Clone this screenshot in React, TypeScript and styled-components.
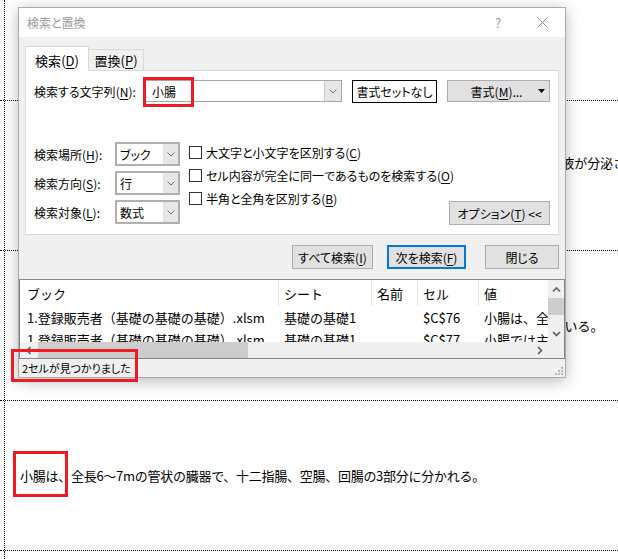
import React from "react";
import styled, { createGlobalStyle } from "styled-components";

const JP = `"Noto Sans CJK JP", "Noto Sans", sans-serif`;

const GlobalStyle = createGlobalStyle`
  html, body { margin: 0; padding: 0; background: #fff; }
  body {
    width: 618px; height: 559px; overflow: hidden; position: relative;
    font-family: ${JP}; color: #000;
  }
  * { box-sizing: border-box; }
`;

/* ---------- background sheet ---------- */
const Sheet = styled.div`
  width: 618px;
  height: 559px;
  display: flex;
  flex-direction: column;
`;

const SheetRow = styled.div<{ $h?: number; $last?: boolean }>`
  flex: ${(p) => (p.$last ? "1" : "none")};
  height: ${(p) => (p.$h ? `${p.$h}px` : "auto")};
  border-bottom: ${(p) => (p.$last ? "none" : "1px dotted #000")};
  display: flex;
`;

const SheetCell = styled.div`
  flex: 1;
  margin-left: 4px;
  border-left: 1px dotted #000;
  display: flex;
  align-items: center;
  padding-left: 15px;
  font-size: 13px;
  line-height: 26px;
  white-space: nowrap;
  overflow: hidden;
`;

const Para = styled.div<{ $spacing?: number }>`
  white-space: nowrap;
  letter-spacing: ${(p) => (p.$spacing ? `${p.$spacing}px` : "normal")};
`;

/* ---------- annotation boxes ---------- */
const Highlight = styled.div<{ $x: number; $y: number; $w: number; $h: number }>`
  position: absolute;
  left: ${(p) => p.$x}px;
  top: ${(p) => p.$y}px;
  width: ${(p) => p.$w}px;
  height: ${(p) => p.$h}px;
  border: 3px solid #ed1c24;
  z-index: 10;
  pointer-events: none;
`;

/* ---------- dialog ---------- */
const Dialog = styled.div`
  position: absolute;
  left: 18px;
  top: 7px;
  width: 548px;
  height: 371px;
  border: 1px solid #aaaaaa;
  background: #f0f0f0;
  box-shadow: 0 3px 14px rgba(0, 0, 0, 0.28);
  display: flex;
  flex-direction: column;
  font-family: ${JP};
  font-size: 12px;
  font-feature-settings: "palt";
  z-index: 5;
`;

const TitleBar = styled.div`
  height: 29px;
  flex: none;
  background: #fff;
  display: flex;
  align-items: center;
  padding-left: 8px;
`;

const Title = styled.div`
  color: #9a9a9a;
  font-size: 12px;
  flex: 1;
`;

const CaptionButton = styled.div<{ $w: number }>`
  width: ${(p) => p.$w}px;
  height: 29px;
  display: flex;
  align-items: center;
  justify-content: center;
  color: #999;
  font-size: 13px;
`;

const Body = styled.div`
  flex: none;
  display: flex;
  flex-direction: column;
  padding: 9px 6px 0 6px;
`;

const Tabs = styled.div`
  height: 24px;
  display: flex;
  align-items: flex-end;
`;

const Tab = styled.div<{ $active?: boolean; $w: number }>`
  position: relative;
  width: ${(p) => p.$w}px;
  height: ${(p) => (p.$active ? 25 : 21)}px;
  margin-bottom: ${(p) => (p.$active ? -1 : 0)}px;
  margin-left: ${(p) => (p.$active ? 0 : -1)}px;
  z-index: ${(p) => (p.$active ? 2 : 1)};
  background: ${(p) => (p.$active ? "#fff" : "#f0f0f0")};
  border: 1px solid #d9d9d9;
  border-bottom: none;
  display: flex;
  align-items: center;
  justify-content: center;
  padding-top: ${(p) => (p.$active ? 2 : 0)}px;
  font-size: 13px;
`;

const Panel = styled.div`
  height: 165px;
  background: #fff;
  border: 1px solid #d9d9d9;
  padding: 9px 7px 9px 8px;
  display: flex;
  flex-direction: column;
`;

const SearchRow = styled.div`
  height: 22px;
  display: flex;
  align-items: center;
`;

const FieldLabel = styled.div<{ $w: number }>`
  width: ${(p) => p.$w}px;
  flex: none;
  white-space: nowrap;
`;

const Combo = styled.div`
  width: 197px;
  height: 22px;
  border: 1px solid #a5a5a5;
  background: #fff;
  display: flex;
  align-items: stretch;
`;

const ComboText = styled.div`
  flex: 1;
  display: flex;
  align-items: center;
  padding-left: 6px;
  font-size: 12px;
`;

const DropPart = styled.div<{ $w: number }>`
  width: ${(p) => p.$w}px;
  flex: none;
  background: #e6e6e6;
  border-left: 1px solid #c9c9c9;
  display: flex;
  align-items: center;
  justify-content: center;
`;

const PreviewBox = styled.div`
  margin-left: 10px;
  width: 85px;
  height: 23px;
  border: 1px solid #000;
  background: #fff;
  display: flex;
  align-items: center;
  justify-content: center;
  margin-top: 1px;
`;

const Button = styled.div<{ $w: number; $h?: number; $default?: boolean }>`
  width: ${(p) => p.$w}px;
  height: ${(p) => p.$h ?? 24}px;
  flex: none;
  background: #e1e1e1;
  border: ${(p) => (p.$default ? "2px solid #0078d7" : "1px solid #adadad")};
  display: flex;
  align-items: center;
  justify-content: center;
  font-size: 12px;
  white-space: nowrap;
`;

const FormatButton = styled.div`
  margin-left: 10px;
  width: 103px;
  height: 22px;
  background: #e1e1e1;
  border: 1px solid #adadad;
  display: grid;
  grid-template-columns: 1fr auto 1fr;
  align-items: center;
  padding-right: 4px;
`;

const FormatText = styled.div`
  grid-column: 2;
  white-space: nowrap;
`;

const FormatArrow = styled.div`
  grid-column: 3;
  justify-self: end;
  display: flex;
`;

const OptionsArea = styled.div`
  margin-top: 40px;
  display: flex;
  flex: 1;
`;

const OptionsGrid = styled.div`
  display: grid;
  grid-template-columns: 81px 65px;
  grid-auto-rows: 24px;
  row-gap: 5px;
  align-items: center;
  flex: none;
`;

const Select = styled.div`
  height: 24px;
  border: 2px solid #b0b0b0;
  background: #fff;
  display: flex;
  align-items: stretch;
`;

const SelectText = styled.div`
  flex: 1;
  display: flex;
  align-items: center;
  padding-left: 3px;
`;

const SelectDrop = styled.div`
  width: 15px;
  background: #e6e6e6;
  display: flex;
  align-items: center;
  justify-content: center;
`;

const CheckList = styled.div`
  flex: 1;
  min-width: 0;
  margin-left: 9px;
  margin-top: -1px;
  display: flex;
  flex-direction: column;
  gap: 1px;
`;

const CheckRow = styled.div`
  height: 22px;
  display: flex;
  align-items: center;
  white-space: nowrap;
`;

const CheckBox = styled.div`
  width: 13px;
  height: 13px;
  border: 1px solid #333;
  background: #fff;
  margin-right: 4px;
  flex: none;
`;

const OptionsButtonWrap = styled.div`
  flex: none;
  margin-right: 1px;
  align-self: flex-end;
`;

const ButtonRow = styled.div`
  margin-top: 10px;
  height: 24px;
  display: flex;
  justify-content: flex-end;
`;

const Spacer = styled.div<{ $w: number }>`
  width: ${(p) => p.$w}px;
  flex: none;
`;

/* ---------- result list ---------- */
const ResultList = styled.div`
  margin-top: 10px;
  height: 80px;
  flex: none;
  border: 1px solid #828790;
  background: #fff;
  display: grid;
  grid-template-columns: 1fr 16px;
  grid-template-rows: 1fr 16px;
  font-feature-settings: normal;
  font-size: 13px;
`;

const DataArea = styled.div`
  overflow: hidden;
  display: flex;
  flex-direction: column;
`;

const ListRow = styled.div<{ $header?: boolean }>`
  height: ${(p) => (p.$header ? 26 : 22)}px;
  flex: none;
  display: flex;
  white-space: nowrap;
`;

const ListCell = styled.div<{ $w: number; $first?: boolean; $header?: boolean }>`
  width: ${(p) => p.$w}px;
  flex: none;
  overflow: hidden;
  display: flex;
  align-items: center;
  padding-left: ${(p) => (p.$first ? 7 : 5)}px;
  border-left: ${(p) =>
    p.$first ? "none" : `1px solid ${p.$header ? "#e3e3e3" : "transparent"}`};
`;

const VScroll = styled.div`
  background: #f0f0f0;
  display: flex;
  flex-direction: column;
`;

const HScroll = styled.div`
  background: #f0f0f0;
  display: flex;
  align-items: stretch;
`;

const ScrollButton = styled.div<{ $len: number; $vertical?: boolean }>`
  flex: none;
  ${(p) => (p.$vertical ? `height: ${p.$len}px;` : `width: ${p.$len}px;`)}
  display: flex;
  align-items: center;
  justify-content: center;
`;

const Thumb = styled.div<{ $len: number; $vertical?: boolean; $offset?: number }>`
  flex: none;
  background: #cdcdcd;
  ${(p) =>
    p.$vertical
      ? `height: ${p.$len}px;`
      : `width: ${p.$len}px; margin-left: ${p.$offset ?? 0}px;`}
`;

const Fill = styled.div`
  flex: 1;
`;

const Corner = styled.div`
  background: #f0f0f0;
`;

const StatusBar = styled.div`
  flex: 1;
  display: flex;
  align-items: center;
  padding-left: 3px;
  font-size: 11px;
`;

const Grip = styled.div`
  align-self: flex-end;
  margin: 0 2px 2px auto;
  display: flex;
`;

const U = styled.span`
  text-decoration: underline;
  text-underline-offset: 2px;
`;

const Mn = ({ k }: { k: string }) => (
  <>
    (<U>{k}</U>)
  </>
);

const Chevron = () => (
  <svg width="8" height="5" viewBox="0 0 8 5">
    <polyline points="0.5,0.5 4,4 7.5,0.5" fill="none" stroke="#707070" strokeWidth="1" />
  </svg>
);

const Arrow = ({ dir }: { dir: "up" | "down" | "left" | "right" }) => {
  const pts = {
    up: "1,5.5 4.5,2 8,5.5",
    down: "1,2 4.5,5.5 8,2",
    left: "5.5,1 2,4.5 5.5,8",
    right: "2,1 5.5,4.5 2,8",
  }[dir];
  const vert = dir === "up" || dir === "down";
  return (
    <svg width={vert ? 9 : 7} height={vert ? 7 : 9} viewBox={vert ? "0 0 9 7" : "0 0 7 9"}>
      <polyline points={pts} fill="none" stroke="#606060" strokeWidth="1.7" />
    </svg>
  );
};

const cols = [258, 93, 46, 61, 240];
const headers = ["ブック", "シート", "名前", "セル", "値"];
const rows = [
  [
    "1.登録販売者（基礎の基礎の基礎）.xlsm",
    "基礎の基礎1",
    "",
    "$C$76",
    "小腸は、全長6〜7mの管状の臓器で、十二指腸、空腸、回腸の3部分に分かれる。",
  ],
  [
    "1.登録販売者（基礎の基礎の基礎）.xlsm",
    "基礎の基礎1",
    "",
    "$C$77",
    "小腸では主に栄養分の吸収が行われる。",
  ],
];

export default function App() {
  return (
    <>
      <GlobalStyle />
      <Sheet>
        <SheetRow $h={101}>
          <SheetCell />
        </SheetRow>
        <SheetRow $h={150}>
          <SheetCell>
            <Para $spacing={-0.08}>
              胃は食道に続く器官で、胃底腺の主細胞からペプシノーゲン、壁細胞から塩酸、副細胞から粘液が分泌され、
              <br />
              食物の消化を助ける。
            </Para>
          </SheetCell>
        </SheetRow>
        <SheetRow $h={150}>
          <SheetCell>
            <Para>小腸の内壁にはひだや絨毛があり、表面積を大きくすることで栄養分の吸収を効率よく行っている。</Para>
          </SheetCell>
        </SheetRow>
        <SheetRow $h={150}>
          <SheetCell>
            <Para $spacing={-0.27}>小腸は、全長6〜7mの管状の臓器で、十二指腸、空腸、回腸の3部分に分かれる。</Para>
          </SheetCell>
        </SheetRow>
        <SheetRow $last>
          <SheetCell />
        </SheetRow>
      </Sheet>

      <Dialog>
        <TitleBar>
          <Title>検索と置換</Title>
          <CaptionButton $w={42}>?</CaptionButton>
          <CaptionButton $w={46}>
            <svg width="11" height="11" viewBox="0 0 11 11">
              <path d="M0.5 0.5 L10.5 10.5 M10.5 0.5 L0.5 10.5" stroke="#8a8a8a" strokeWidth="1" />
            </svg>
          </CaptionButton>
        </TitleBar>

        <Body>
          <Tabs>
            <Tab $active $w={64}>
              検索<Mn k="D" />
            </Tab>
            <Tab $w={56}>
              置換<Mn k="P" />
            </Tab>
          </Tabs>
          <Panel>
            <SearchRow>
              <FieldLabel $w={111}>
                検索する文字列<Mn k="N" />:
              </FieldLabel>
              <Combo>
                <ComboText>小腸</ComboText>
                <DropPart $w={17}>
                  <Chevron />
                </DropPart>
              </Combo>
              <PreviewBox>書式セットなし</PreviewBox>
              <FormatButton>
                <FormatText>
                  書式<Mn k="M" />...
                </FormatText>
                <FormatArrow>
                  <svg width="7" height="4" viewBox="0 0 7 4">
                    <polygon points="0,0 7,0 3.5,4" fill="#000" />
                  </svg>
                </FormatArrow>
              </FormatButton>
            </SearchRow>

            <OptionsArea>
              <OptionsGrid>
                <FieldLabel $w={81}>
                  検索場所<Mn k="H" />:
                </FieldLabel>
                <Select>
                  <SelectText>ブック</SelectText>
                  <SelectDrop>
                    <Chevron />
                  </SelectDrop>
                </Select>
                <FieldLabel $w={81}>
                  検索方向<Mn k="S" />:
                </FieldLabel>
                <Select>
                  <SelectText>行</SelectText>
                  <SelectDrop>
                    <Chevron />
                  </SelectDrop>
                </Select>
                <FieldLabel $w={81}>
                  検索対象<Mn k="L" />:
                </FieldLabel>
                <Select>
                  <SelectText>数式</SelectText>
                  <SelectDrop>
                    <Chevron />
                  </SelectDrop>
                </Select>
              </OptionsGrid>

              <CheckList>
                <CheckRow>
                  <CheckBox />
                  大文字と小文字を区別する<Mn k="C" />
                </CheckRow>
                <CheckRow>
                  <CheckBox />
                  セル内容が完全に同一であるものを検索する<Mn k="O" />
                </CheckRow>
                <CheckRow>
                  <CheckBox />
                  半角と全角を区別する<Mn k="B" />
                </CheckRow>
              </CheckList>

              <OptionsButtonWrap>
                <Button $w={101}>
                  オプション<Mn k="T" />&nbsp;&lt;&lt;
                </Button>
              </OptionsButtonWrap>
            </OptionsArea>
          </Panel>

          <ButtonRow>
            <Button $w={81}>
              すべて検索<Mn k="I" />
            </Button>
            <Spacer $w={14} />
            <Button $w={79} $default>
              次を検索<Mn k="F" />
            </Button>
            <Spacer $w={19} />
            <Button $w={74}>閉じる</Button>
          </ButtonRow>
        </Body>

        <ResultList>
          <DataArea>
            <ListRow $header>
              {headers.map((h, i) => (
                <ListCell key={h} $w={cols[i]} $first={i === 0} $header>
                  {h}
                </ListCell>
              ))}
            </ListRow>
            {rows.map((r, ri) => (
              <ListRow key={ri}>
                {r.map((c, i) => (
                  <ListCell key={i} $w={cols[i]} $first={i === 0}>
                    {c}
                  </ListCell>
                ))}
              </ListRow>
            ))}
          </DataArea>
          <VScroll>
            <ScrollButton $vertical $len={18}>
              <Arrow dir="up" />
            </ScrollButton>
            <Thumb $vertical $len={17} />
            <Fill />
            <ScrollButton $vertical $len={18}>
              <Arrow dir="down" />
            </ScrollButton>
          </VScroll>
          <HScroll>
            <ScrollButton $len={17}>
              <Arrow dir="left" />
            </ScrollButton>
            <Thumb $len={210} $offset={1} />
            <Fill />
            <ScrollButton $len={17}>
              <Arrow dir="right" />
            </ScrollButton>
          </HScroll>
          <Corner />
        </ResultList>

        <StatusBar>
          2セルが見つかりました
          <Grip>
            <svg width="8" height="8" viewBox="0 0 8 8">
              <g fill="#b8b8b8">
                <rect x="6" y="0" width="2" height="2" />
                <rect x="3" y="3" width="2" height="2" />
                <rect x="6" y="3" width="2" height="2" />
                <rect x="0" y="6" width="2" height="2" />
                <rect x="3" y="6" width="2" height="2" />
                <rect x="6" y="6" width="2" height="2" />
              </g>
            </svg>
          </Grip>
        </StatusBar>
      </Dialog>

      <Highlight $x={143} $y={77} $w={51} $h={30} />
      <Highlight $x={11} $y={349} $w={127} $h={33} />
      <Highlight $x={13} $y={451} $w={55} $h={46} />
    </>
  );
}
